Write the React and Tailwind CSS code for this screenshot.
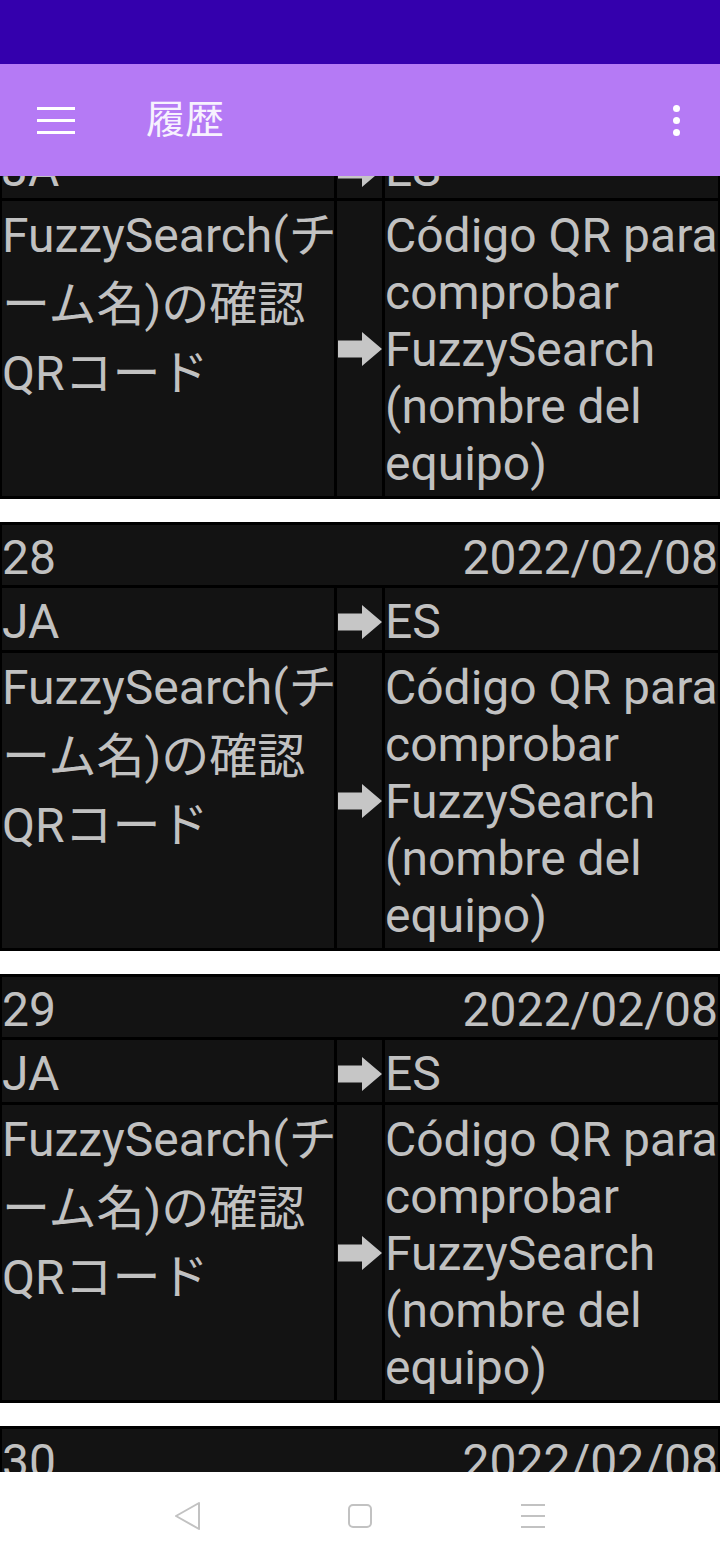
import React from 'react';

const ENTRIES = [27, 28, 29, 30, 31].map((n) => ({
  id: n,
  date: '2022/02/08',
  from: 'JA',
  to: 'ES',
  source: ['FuzzySearch(チ', 'ーム名)の確認', 'QRコード'],
  target: ['Código QR para', 'comprobar', 'FuzzySearch', '(nombre del', 'equipo)'],
}));

const Arrow = () => (
  <svg width="44" height="34" viewBox="0 0 44 34" aria-hidden>
    <polygon points="0,8.5 24,8.5 24,0 44,17 24,34 24,25.5 0,25.5" fill="#c6c6c6" />
  </svg>
);

const HistoryCard = ({ entry }) => (
  <div className="grid grid-cols-[332px_45px_1fr] gap-[3px] bg-black px-[2px] py-[3px]">
    <div className="col-span-3 flex justify-between bg-[#131313] pt-[6px] leading-[54px]">
      <span>{entry.id}</span>
      <span>{entry.date}</span>
    </div>

    <div className="bg-[#131313] pt-[6px] leading-[56px]">{entry.from}</div>
    <div className="flex items-center justify-end bg-[#131313] pt-[6px]">
      <Arrow />
    </div>
    <div className="bg-[#131313] pt-[6px] leading-[56px]">{entry.to}</div>

    <div className="bg-[#131313] leading-[69px] whitespace-nowrap">
      {entry.source.map((line) => (
        <div key={line}>{line}</div>
      ))}
    </div>
    <div className="flex items-center justify-end bg-[#131313]">
      <Arrow />
    </div>
    <div className="bg-[#131313] pt-[6px] pb-[4px] leading-[57px] whitespace-nowrap">
      {entry.target.map((line) => (
        <div key={line}>{line}</div>
      ))}
    </div>
  </div>
);

const NavBar = () => (
  <div className="flex h-[88px] shrink-0 items-center justify-center gap-[145px] bg-white">
    <svg width="28" height="30" viewBox="0 0 28 30" aria-hidden>
      <path
        d="M26 2 L3 15 L26 28 Z"
        fill="none"
        stroke="#c2c2c2"
        strokeWidth="2"
        strokeLinejoin="round"
      />
    </svg>
    <svg width="28" height="28" viewBox="0 0 28 28" aria-hidden>
      <rect x="3" y="3" width="22" height="22" rx="4" fill="none" stroke="#c2c2c2" strokeWidth="2" />
    </svg>
    <svg width="28" height="28" viewBox="0 0 28 28" aria-hidden>
      <path d="M2 3 H26 M2 14 H26 M2 25 H26" stroke="#c2c2c2" strokeWidth="2" />
    </svg>
  </div>
);

export default function App() {
  return (
    <div className="flex h-[1560px] w-[720px] flex-col overflow-hidden bg-white font-[Roboto,'Noto_Sans_CJK_JP',sans-serif]">
      <div className="h-[64px] shrink-0 bg-[#3400ad]" />

      <header className="flex h-[112px] shrink-0 items-center bg-[#b57af5]">
        <div className="ml-[37px] flex w-[38px] flex-col gap-[9px]">
          <span className="h-[3px] bg-white" />
          <span className="h-[3px] bg-white" />
          <span className="h-[3px] bg-white" />
        </div>
        <h1 className="ml-[71px] flex-1 text-[39px] leading-none text-[#f7f2fe]">履歴</h1>
        <div className="mr-[40px] flex flex-col gap-[5px]">
          <span className="h-[7px] w-[7px] rounded-full bg-white" />
          <span className="h-[7px] w-[7px] rounded-full bg-white" />
          <span className="h-[7px] w-[7px] rounded-full bg-white" />
        </div>
      </header>

      <main className="min-h-0 flex-1 overflow-hidden bg-white">
        <div className="-mt-[106px] flex flex-col gap-[23px] text-[48px] text-[#c1c1c1]">
          {ENTRIES.map((entry) => (
            <HistoryCard key={entry.id} entry={entry} />
          ))}
        </div>
      </main>

      <NavBar />
    </div>
  );
}
